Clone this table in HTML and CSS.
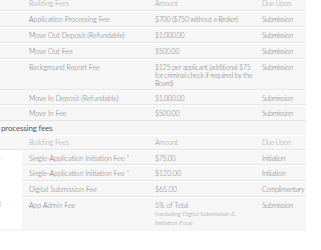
FILE: index.html
```html
<!DOCTYPE html>
<html lang="en">
<head>
<meta charset="UTF-8">
<title>Fees</title>
<link rel="stylesheet" href="styles.css">
</head>
<body>
<div class="panel">
    <table class="fees fees-top">
        <colgroup><col class="c-side"><col class="c-name"><col class="c-amt"><col class="c-due"></colgroup>
        <thead>
            <tr><th class="side"></th><th>Building Fees</th><th>Amount</th><th>Due Upon</th></tr>
        </thead>
        <tbody>
            <tr><td class="side"></td><td>Application Processing Fee</td><td>$700 ($750 without a Broker)</td><td>Submission</td></tr>
            <tr><td class="side"></td><td>Move Out Deposit (Refundable)</td><td>$1,000.00</td><td>Submission</td></tr>
            <tr><td class="side"></td><td>Move Out Fee</td><td>$500.00</td><td>Submission</td></tr>
            <tr><td class="side"></td><td>Background Report Fee</td><td>$125 per applicant (additional $75 for criminal check if required by the Board)</td><td>Submission</td></tr>
            <tr><td class="side"></td><td>Move In Deposit (Refundable)</td><td>$1,000.00</td><td>Submission</td></tr>
            <tr><td class="side"></td><td>Move In Fee</td><td>$500.00</td><td>Submission</td></tr>
        </tbody>
    </table>

    <h3 class="section-title">processing fees</h3>

    <table class="fees fees-bottom">
        <colgroup><col class="c-side"><col class="c-name"><col class="c-amt"><col class="c-due"></colgroup>
        <thead>
            <tr><th class="side"></th><th>Building Fees</th><th>Amount</th><th>Due Upon</th></tr>
        </thead>
        <tbody>
            <tr><td class="side white" rowspan="4"><span class="frag frag-a">.</span><span class="frag frag-b">l</span></td><td>Single-Application Initiation Fee *</td><td>$75.00</td><td>Initiation</td></tr>
            <tr><td>Single-Application Initiation Fee *</td><td>$120.00</td><td>Initiation</td></tr>
            <tr><td>Digital Submission Fee</td><td>$65.00</td><td>Complimentary</td></tr>
            <tr class="last"><td>App Admin Fee</td><td>5% of Total<br><small>(excluding Digital Submission &amp;<br>Initiation Fees)</small></td><td>Submission</td></tr>
        </tbody>
    </table>
</div>
</body>
</html>
```

FILE: styles.css
```css
body { margin: 0; background: #fff; font-family: "Lato", "Open Sans", sans-serif; color: #707070; }

.panel { width: 306px; height: 236px; background: #f6f6f6; }

.fees { width: 306px; border-collapse: collapse; table-layout: fixed; font-size: 7px; font-weight: 300; }
.c-side { width: 22px; }
.c-name { width: 126px; }
.c-amt { width: 108px; }
.c-due { width: 50px; }

.fees th, .fees td {
    text-align: left; vertical-align: top; font-weight: 300;
    padding: 4px 0 2px 7px; line-height: 8px;
    border-bottom: 1px solid #e4e4e4;
    box-shadow: inset 0 1px 0 #fff;
}
.fees td:nth-child(3), .fees th:nth-child(3) { letter-spacing: -0.25px; padding-right: 2px; }
.fees td:last-child, .fees th:last-child { padding-left: 6px; white-space: nowrap; letter-spacing: -0.3px; }
.fees th { color: #9c9c9c; }
.fees .side { padding: 0; }
.fees tr { height: 15.75px; }

.fees-top { margin-top: -5px; }

.section-title {
    margin: 0; padding: 0 0 0 1px; height: 14px; line-height: 14px;
    font-size: 8px; letter-spacing: -0.15px; font-weight: 400; color: #5a5a5a;
}

.fees-bottom thead tr { height: 14px; }
.fees-bottom th { padding-top: 3px; padding-bottom: 1px; }
.fees-bottom .side.white { background: #fff; border-bottom: none; box-shadow: none; position: relative; }
.fees-bottom .last td { border-bottom: none; }
.fees small { font-size: 6px; color: #888; }

.frag { position: absolute; left: 0; color: #999; font-size: 7px; line-height: 8px; }
.frag-a { top: 2px; }
.frag-b { top: 50px; }
```
